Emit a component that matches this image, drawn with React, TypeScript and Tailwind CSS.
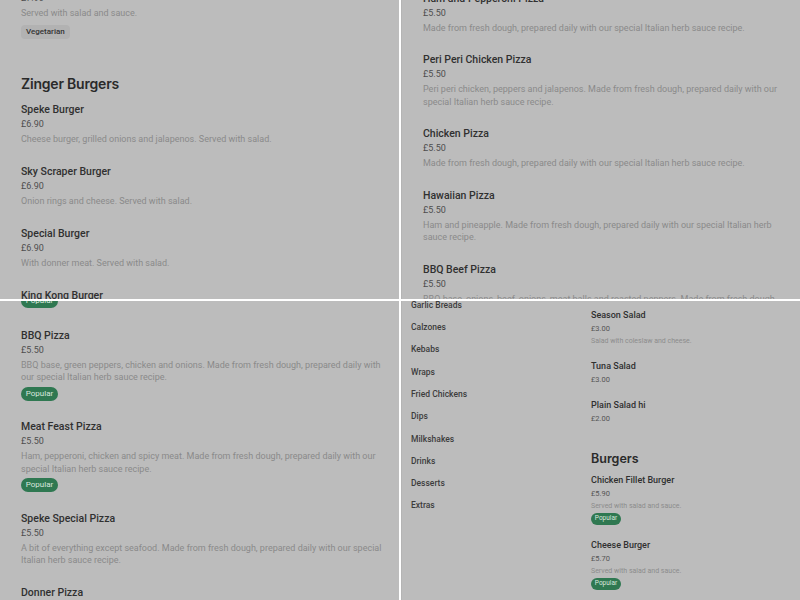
import React from 'react';

interface Item {
  name: string;
  price: string;
  desc?: string;
  badge?: 'Popular' | 'Vegetarian';
}

const PIZZA_TAIL = 'Made from fresh dough, prepared daily with our special Italian herb sauce recipe.';

function Badge({ kind, small }: { kind: 'Popular' | 'Vegetarian'; small?: boolean }) {
  if (kind === 'Vegetarian') {
    return (
      <span className="inline-flex items-center h-[14px] px-[5px] rounded-[4px] bg-[#b2b2b2] text-[#353535] text-[8px] leading-none font-medium">
        Vegetarian
      </span>
    );
  }
  return (
    <span
      className={
        small
          ? 'inline-flex items-center justify-center h-[12px] w-[30px] rounded-full bg-[#2f7851] text-[#d9e6de] text-[6.5px] leading-none'
          : 'inline-flex items-center justify-center h-[14px] w-[37px] rounded-full bg-[#2f7851] text-[#d9e6de] text-[8px] leading-none'
      }
    >
      Popular
    </span>
  );
}

// big menu card, used in three of the panels
function MenuItem({ item }: { item: Item }) {
  return (
    <div className="flex flex-col items-start">
      <div className="text-[10.5px] leading-[15px] font-medium text-[#303030]">{item.name}</div>
      <div className="text-[9px] leading-[15px] text-[#4e4e4e]">{item.price}</div>
      {item.desc && (
        <div className="mt-px text-[9px] leading-[12.5px] text-[#8a8a8a] max-w-[362px]">{item.desc}</div>
      )}
      {item.badge && (
        <div className="mt-[3px] flex">
          <Badge kind={item.badge} />
        </div>
      )}
    </div>
  );
}

// smaller card from the narrow view
function SmallItem({ item }: { item: Item }) {
  return (
    <div className="flex flex-col items-start">
      <div className="text-[9px] leading-[13px] font-medium text-[#303030]">{item.name}</div>
      <div className="text-[7.5px] leading-[13px] text-[#555]">{item.price}</div>
      {item.desc && <div className="text-[7px] leading-[12px] text-[#8c8c8c]">{item.desc}</div>}
      {item.badge && (
        <div className="mt-px flex">
          <Badge kind={item.badge} small />
        </div>
      )}
    </div>
  );
}

const burgers: Item[] = [
  { name: 'Speke Burger', price: '£6.90', desc: 'Cheese burger, grilled onions and jalapenos. Served with salad.' },
  { name: 'Sky Scraper Burger', price: '£6.90', desc: 'Onion rings and cheese. Served with salad.' },
  { name: 'Special Burger', price: '£6.90', desc: 'With donner meat. Served with salad.' },
  { name: 'King Kong Burger', price: '£6.90', desc: 'Served with salad.' },
];

const pizzasA: Item[] = [
  { name: 'Ham and Pepperoni Pizza', price: '£5.50', desc: PIZZA_TAIL },
  { name: 'Peri Peri Chicken Pizza', price: '£5.50', desc: 'Peri peri chicken, peppers and jalapenos. ' + PIZZA_TAIL },
  { name: 'Chicken Pizza', price: '£5.50', desc: PIZZA_TAIL },
  { name: 'Hawaiian Pizza', price: '£5.50', desc: 'Ham and pineapple. ' + PIZZA_TAIL },
  { name: 'BBQ Beef Pizza', price: '£5.50', desc: 'BBQ base, onions, beef, onions, meat balls and roasted peppers. ' + PIZZA_TAIL },
];

const pizzasB: Item[] = [
  { name: 'BBQ Pizza', price: '£5.50', desc: 'BBQ base, green peppers, chicken and onions. ' + PIZZA_TAIL, badge: 'Popular' },
  { name: 'Meat Feast Pizza', price: '£5.50', desc: 'Ham, pepperoni, chicken and spicy meat. ' + PIZZA_TAIL, badge: 'Popular' },
  { name: 'Speke Special Pizza', price: '£5.50', desc: 'A bit of everything except seafood. ' + PIZZA_TAIL },
  { name: 'Donner Pizza', price: '£5.50', desc: 'Donner meat and onions. ' + PIZZA_TAIL },
];

const categories = ['Garlic Breads', 'Calzones', 'Kebabs', 'Wraps', 'Fried Chickens', 'Dips', 'Milkshakes', 'Drinks', 'Desserts', 'Extras'];

const salads: Item[] = [
  { name: 'Season Salad', price: '£3.00', desc: 'Salad with coleslaw and cheese.' },
  { name: 'Tuna Salad', price: '£3.00' },
  { name: 'Plain Salad hi', price: '£2.00' },
];

const smallBurgers: Item[] = [
  { name: 'Chicken Fillet Burger', price: '£5.90', desc: 'Served with salad and sauce.', badge: 'Popular' },
  { name: 'Cheese Burger', price: '£5.70', desc: 'Served with salad and sauce.', badge: 'Popular' },
];

export default function App() {
  return (
    <div className="w-[800px] h-[600px] bg-white grid grid-cols-[399px_399px] grid-rows-[299px_299px] gap-[2px] overflow-hidden font-['Roboto',sans-serif]">
      {/* top left: end of veg section + zinger burgers */}
      <div className="bg-[#bcbcbc] overflow-hidden pl-[21px]">
        <div className="mt-[-9px] flex flex-col items-start">
          <div className="text-[9px] leading-[15px] text-[#4e4e4e]">£7.90</div>
          <div className="mt-px text-[9px] leading-[12.5px] text-[#8a8a8a]">Served with salad and sauce.</div>
          <div className="mt-[5px] flex">
            <Badge kind="Vegetarian" />
          </div>
          <h2 className="mt-[35px] text-[14px] leading-[20px] font-semibold text-[#2a2a2a] tracking-[-0.2px] font-['Inter',sans-serif]">
            Zinger Burgers
          </h2>
          <div className="mt-[8px] flex flex-col gap-[18.5px]">
            {burgers.map((b) => (
              <MenuItem key={b.name} item={b} />
            ))}
          </div>
        </div>
      </div>

      {/* top right: pizzas */}
      <div className="bg-[#bcbcbc] overflow-hidden pl-[21px] border-l border-[#b4b4b4]">
        <div className="mt-[-9.5px] flex flex-col gap-[18px]">
          {pizzasA.map((p) => (
            <MenuItem key={p.name} item={p} />
          ))}
        </div>
      </div>

      {/* bottom left: pizzas with badges */}
      <div className="bg-[#bcbcbc] overflow-hidden pl-[21px]">
        <div className="mt-[-7px] flex flex-col items-start">
          <Badge kind="Popular" />
          <div className="mt-[19.5px] flex flex-col gap-[18.5px]">
            {pizzasB.map((p) => (
              <MenuItem key={p.name} item={p} />
            ))}
          </div>
        </div>
      </div>

      {/* bottom right: category list + salads / burgers */}
      <div className="bg-[#bcbcbc] overflow-hidden border-l border-[#b4b4b4] flex">
        <nav className="w-[189px] pl-[9px] mt-[-7px] flex flex-col">
          {categories.map((c) => (
            <div key={c} className="h-[22.3px] flex items-center text-[8.5px] font-medium text-[#3d3d3d]">
              {c}
            </div>
          ))}
        </nav>
        <div className="flex-1 pt-[7.5px] flex flex-col items-start">
          <div className="flex flex-col gap-[13px]">
            {salads.map((s) => (
              <SmallItem key={s.name} item={s} />
            ))}
          </div>
          <h3 className="mt-[26.5px] text-[12.5px] leading-[16px] font-semibold text-[#2a2a2a] font-['Inter',sans-serif]">
            Burgers
          </h3>
          <div className="mt-[6.5px] flex flex-col gap-[14px]">
            {smallBurgers.map((b) => (
              <SmallItem key={b.name} item={b} />
            ))}
          </div>
        </div>
      </div>
    </div>
  );
}
